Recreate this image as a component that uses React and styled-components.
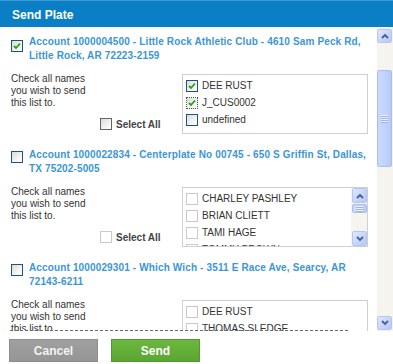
import React from 'react';
import styled, { createGlobalStyle } from 'styled-components';

const Global = createGlobalStyle`
  html, body { margin: 0; padding: 0; background: #fff; }
  body { font-family: "Liberation Sans", Arial, sans-serif; }
`;

const Dialog = styled.div`
  width: 393px;
  height: 364px;
  display: flex;
  flex-direction: column;
  background: #fff;
  overflow: hidden;
`;

const Header = styled.div`
  height: 27px;
  flex: none;
  box-sizing: border-box;
  padding: 2px 0 0 12px;
  display: flex;
  align-items: center;
  background: #0b7fc6;
  border-top: 1px solid #3f9bd6;
  color: #fff;
  font-weight: bold;
  font-size: 12px;
`;

const Body = styled.div`
  height: 304px;
  flex: none;
  display: flex;
`;

const Viewport = styled.div`
  position: relative;
  flex: 1;
  overflow: hidden;
  padding-top: 8px;
`;

const DashLine = styled.div`
  position: absolute;
  left: 10px;
  width: 338px;
  bottom: 0;
  border-top: 1px dashed #6a6a6a;
`;

const Section = styled.div`
  display: flex;
  flex-direction: column;
  padding: 0 0 14px 11px;
`;

const AccountRow = styled.div`
  display: flex;
  align-items: flex-start;
  gap: 6px;
`;

const AccountText = styled.div`
  color: #3b96d6;
  font-weight: bold;
  font-size: 10px;
  line-height: 14px;
  letter-spacing: 0.14px;
  white-space: nowrap;
`;

const BoxWrap = styled.div`
  margin-top: ${p => p.$top || 0}px;
  flex: none;
`;

const Box = styled.span`
  display: inline-flex;
  align-items: center;
  justify-content: center;
  width: 12px;
  height: 12px;
  box-sizing: border-box;
  flex: none;
  border: 1px ${p => (p.$focus ? 'dotted' : 'solid')}
    ${p => (p.$tone === 'gray' ? '#c9c9c9' : p.$tone === 'dark' ? '#5b6670' : p.$focus ? '#555' : '#1d5281')};
  background: ${p =>
    p.$tone === 'gray' ? '#fff' : 'linear-gradient(135deg, #dcdcd6 0%, #f4f4f0 60%, #fff 100%)'};
`;

const Row = styled.div`
  display: flex;
  margin-top: 11px;
`;

const LeftCol = styled.div`
  width: 171px;
  flex: none;
  display: flex;
  flex-direction: column;
`;

const Instructions = styled.div`
  width: 85px;
  margin-top: -1px;
  font-size: 10px;
  line-height: 12px;
  color: #333;
`;

const SelectAllRow = styled.label`
  display: flex;
  align-items: center;
  gap: 4px;
  margin: 9px 0 0 89px;
  font-size: 10px;
  font-weight: bold;
  color: #444;
  height: 12px;
`;

const ListBox = styled.div`
  width: 186px;
  height: 60px;
  box-sizing: border-box;
  border: 1px solid #cfcfcf;
  display: flex;
  overflow: hidden;
  flex: none;
`;

const Items = styled.div`
  flex: 1;
  padding: 2px 0 0 3px;
  overflow: hidden;
`;

const Item = styled.div`
  height: 17px;
  display: flex;
  align-items: center;
  gap: 4px;
  font-size: 10px;
  color: #333;
  white-space: nowrap;
`;

const Track = styled.div`
  width: ${p => p.$w}px;
  flex: none;
  display: flex;
  flex-direction: column;
  background: ${p => p.$bg};
  padding: ${p => p.$pad};
  box-sizing: border-box;
`;

const Arrow = styled.div`
  height: ${p => p.$h}px;
  flex: none;
  box-sizing: border-box;
  border: 1px solid #b4c6f1;
  border-radius: 2px;
  background: linear-gradient(135deg, #dfe8fe 0%, #c3d4fb 60%, #b5c9f7 100%);
  display: flex;
  align-items: center;
  justify-content: center;
`;

const Thumb = styled.div`
  margin-top: ${p => p.$top}px;
  height: ${p => p.$h}px;
  flex: none;
  box-sizing: border-box;
  border: 1px solid #a9bdef;
  border-radius: 2px;
  background: linear-gradient(90deg, #cad9fd 0%, #c2d3fc 50%, #b7cbf8 100%);
  display: flex;
  flex-direction: column;
  align-items: center;
  justify-content: center;
  gap: 1px;
`;

const Grip = styled.span`
  width: 7px;
  height: 1px;
  background: #eef3ff;
  box-shadow: 0 1px 0 #9cb3ea;
`;

const Spacer = styled.div`
  flex: 1;
`;

const Footer = styled.div`
  flex: 1;
  display: flex;
  gap: 13px;
  padding: 8px 0 0 9px;
`;

const Button = styled.button`
  width: 89px;
  height: 23px;
  border: 1px solid ${p => (p.$primary ? '#4e9a2a' : '#8e8e8e')};
  background: ${p =>
    p.$primary ? 'linear-gradient(180deg, #6cb73f 0%, #5aa631 100%)' : 'linear-gradient(180deg, #a0a0a0 0%, #959595 100%)'};
  color: ${p => (p.$primary ? '#fff' : '#f2f2f2')};
  font-family: "Liberation Sans", Arial, sans-serif;
  font-weight: bold;
  font-size: 12px;
  padding: 0;
  cursor: pointer;
`;

const Check = () => (
  <svg width="8" height="8" viewBox="0 0 8 8">
    <polyline points="1,4 3,6 7,1.5" fill="none" stroke="#21a21f" strokeWidth="1.8" />
  </svg>
);

const Chevron = ({ up }) => (
  <svg width="8" height="6" viewBox="0 0 8 6">
    <polyline
      points={up ? '1,5 4,2 7,5' : '1,1 4,4 7,1'}
      fill="none"
      stroke="#4a5f88"
      strokeWidth="1.8"
    />
  </svg>
);

const CheckBox = ({ checked, tone, focus }) => (
  <Box $tone={tone} $focus={focus}>{checked && <Check />}</Box>
);

const Scroll = ({ w, bg, pad, arrowH, thumbTop, thumbH, grips }) => (
  <Track $w={w} $bg={bg} $pad={pad}>
    <Arrow $h={arrowH}><Chevron up /></Arrow>
    <Thumb $top={thumbTop} $h={thumbH}>
      {Array.from({ length: grips }).map((_, i) => <Grip key={i} />)}
    </Thumb>
    <Spacer />
    <Arrow $h={arrowH}><Chevron /></Arrow>
  </Track>
);

const accounts = [
  {
    lines: ['Account 1000004500 - Little Rock Athletic Club - 4610 Sam Peck Rd,', 'Little Rock, AR 72223-2159'],
    checked: true,
    names: [
      { n: 'DEE RUST', c: true },
      { n: 'J_CUS0002', c: true, focus: true },
      { n: 'undefined', c: false },
    ],
  },
  {
    lines: ['Account 1000022834 - Centerplate No 00745 - 650 S Griffin St, Dallas,', 'TX 75202-5005'],
    checked: false,
    scroll: true,
    names: [
      { n: 'CHARLEY PASHLEY' },
      { n: 'BRIAN CLIETT' },
      { n: 'TAMI HAGE' },
      { n: 'TOMMY BROWN' },
      { n: 'JOHN SMITH' },
    ],
  },
  {
    lines: ['Account 1000029301 - Which Wich - 3511 E Race Ave, Searcy, AR', '72143-6211'],
    checked: false,
    names: [{ n: 'DEE RUST' }, { n: 'THOMAS SLEDGE' }],
  },
];

export default function App() {
  return (
    <>
      <Global />
      <Dialog>
        <Header>Send Plate</Header>
        <Body>
          <Viewport>
            {accounts.map((a, i) => (
              <Section key={i}>
                <AccountRow>
                  <BoxWrap $top={1}>
                    <CheckBox checked={a.checked} />
                  </BoxWrap>
                  <AccountText>
                    {a.lines[0]}
                    <br />
                    {a.lines[1]}
                  </AccountText>
                </AccountRow>
                <Row>
                  <LeftCol>
                    <Instructions>Check all names you wish to send this list to.</Instructions>
                    <SelectAllRow>
                      <CheckBox tone={a.checked ? 'dark' : 'gray'} />
                      Select All
                    </SelectAllRow>
                  </LeftCol>
                  <ListBox>
                    <Items>
                      {a.names.map((m, j) => (
                        <Item key={j}>
                          <CheckBox
                            checked={m.c}
                            focus={m.focus}
                            tone={a.checked ? undefined : 'gray'}
                          />
                          {m.n}
                        </Item>
                      ))}
                    </Items>
                    {a.scroll && (
                      <Scroll
                        w={16}
                        bg="#f5f4ef"
                        pad="0 0 0 1px"
                        arrowH={15}
                        thumbTop={1}
                        thumbH={9}
                        grips={3}
                      />
                    )}
                  </ListBox>
                </Row>
              </Section>
            ))}
            <DashLine />
          </Viewport>
          <Scroll
            w={16}
            bg="#f5f4ef"
            pad="2px 1px 1px 0"
            arrowH={14}
            thumbTop={27}
            thumbH={97}
            grips={4}
          />
        </Body>
        <Footer>
          <Button>Cancel</Button>
          <Button $primary>Send</Button>
        </Footer>
      </Dialog>
    </>
  );
}
